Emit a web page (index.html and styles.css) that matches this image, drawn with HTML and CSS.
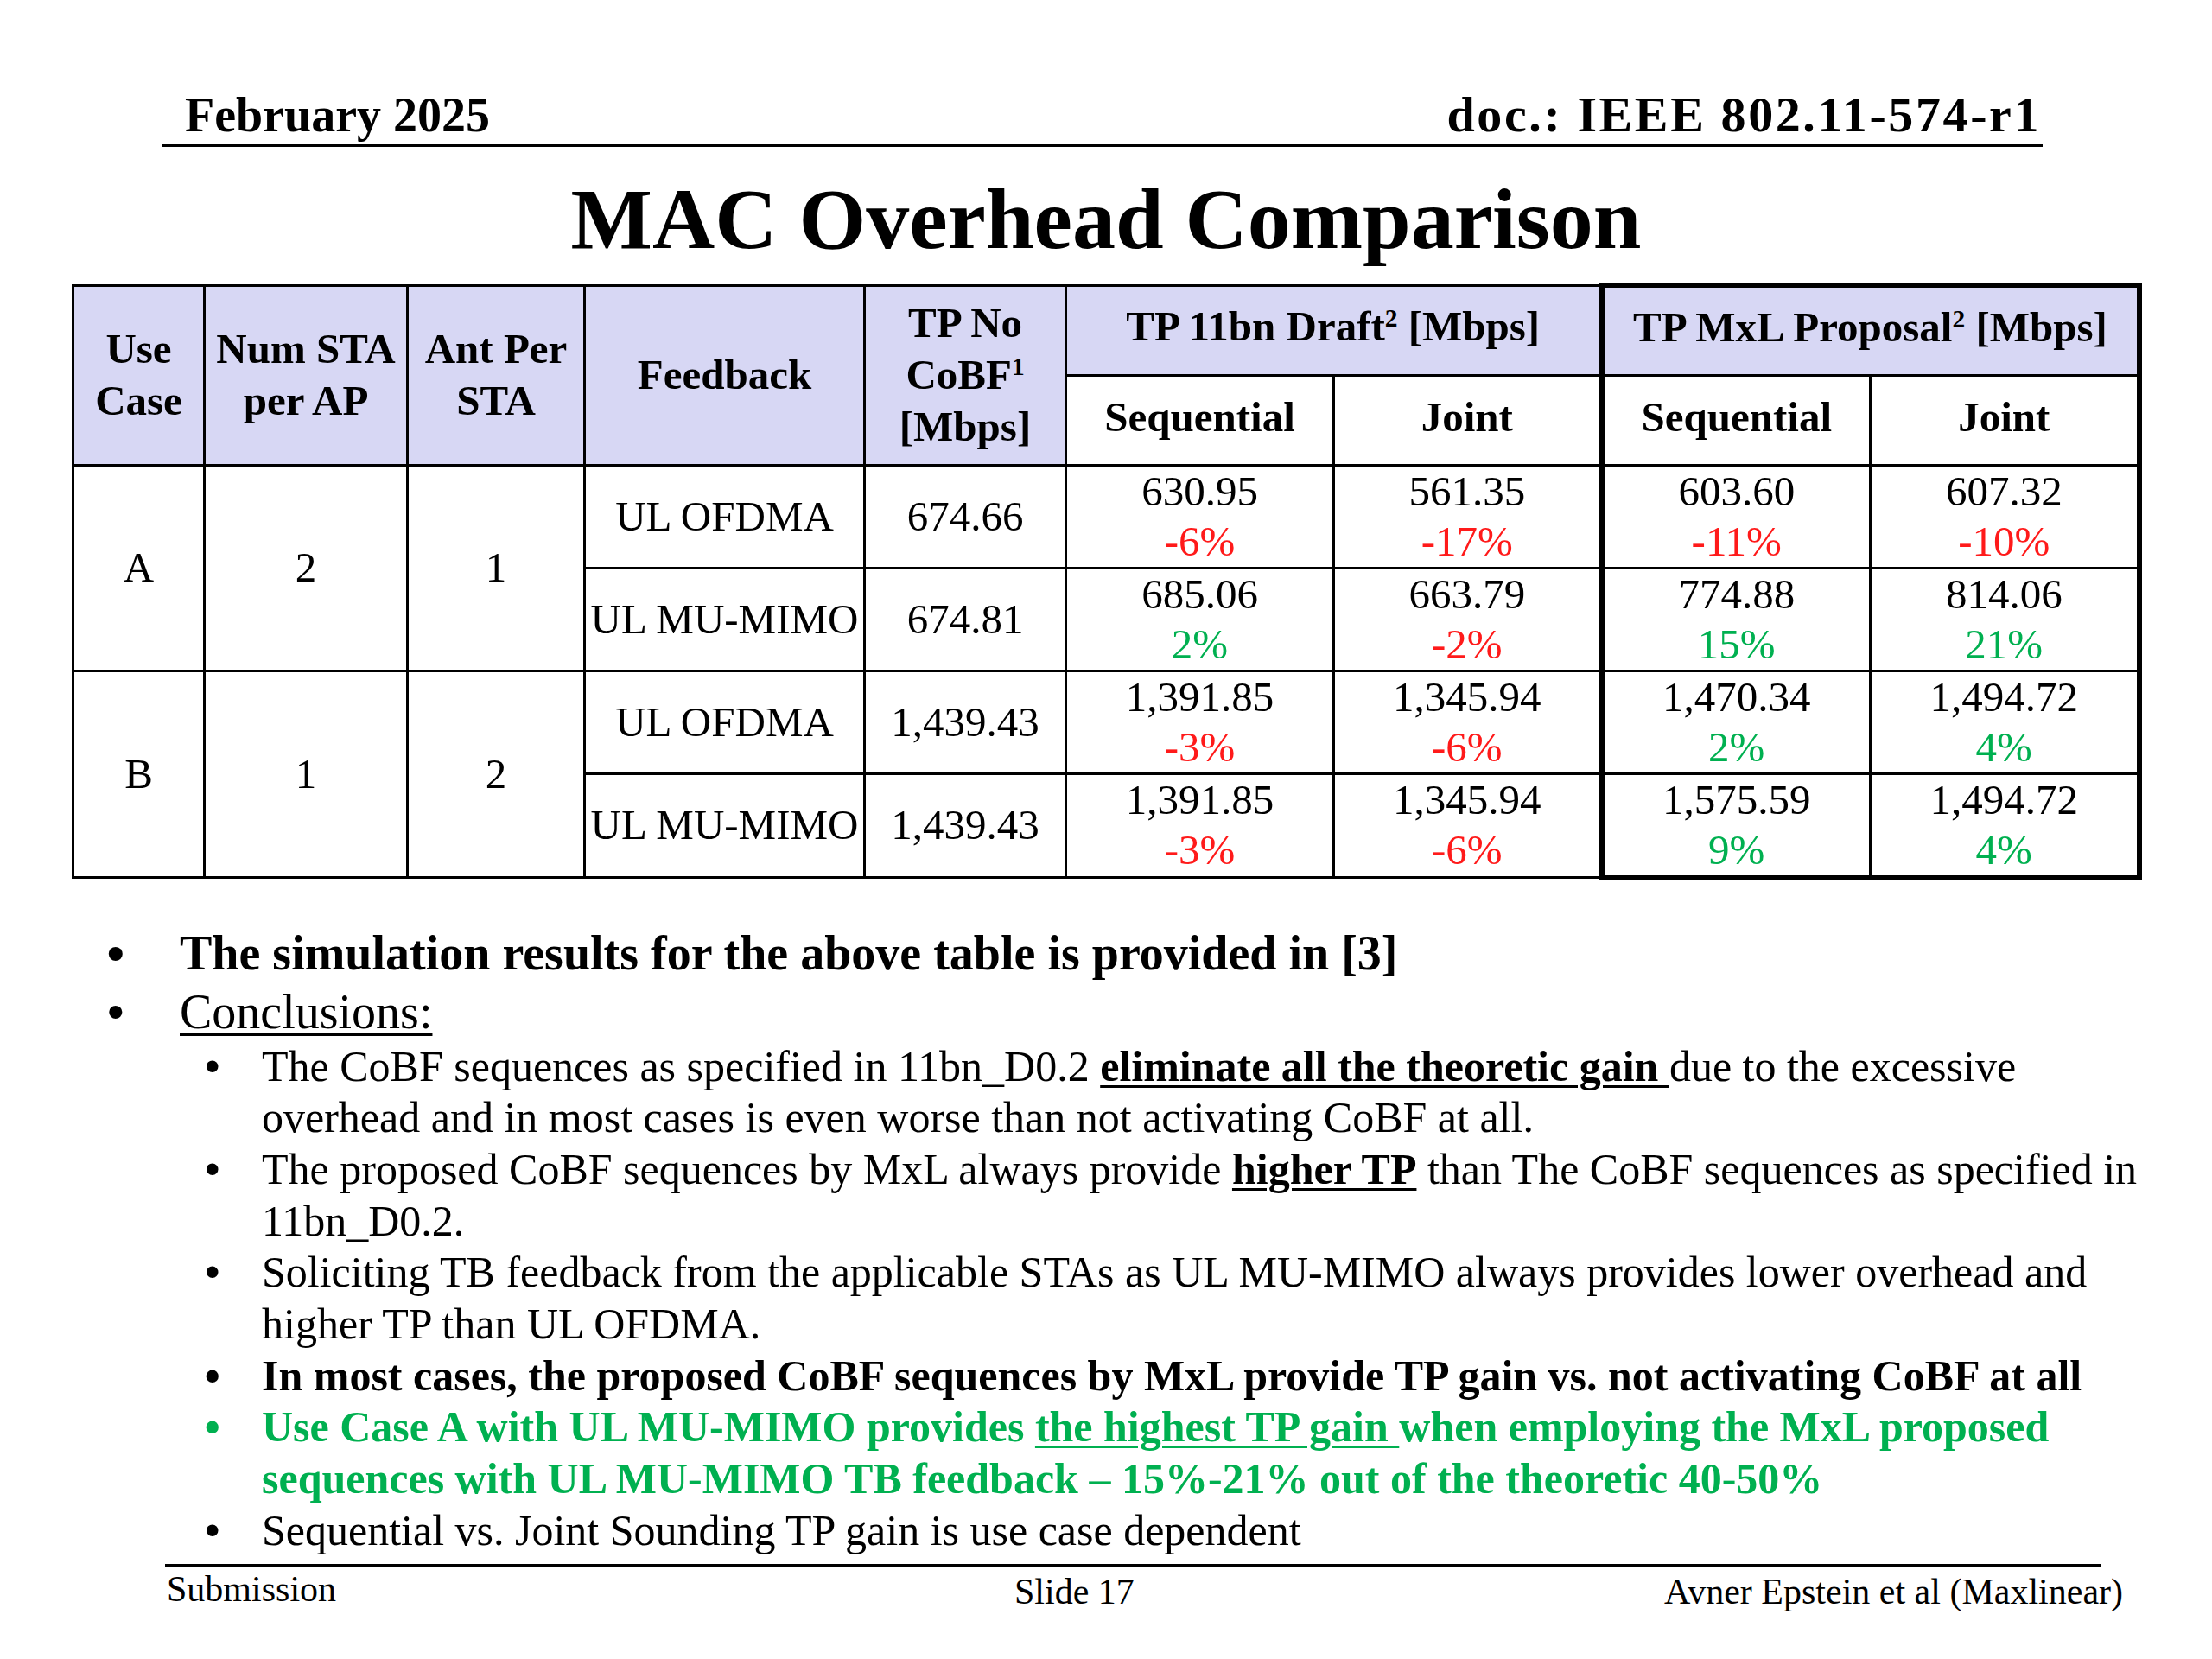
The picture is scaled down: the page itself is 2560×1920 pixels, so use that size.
FILE: index.html
```html
<!DOCTYPE html>
<html lang="en">
<head>
<meta charset="utf-8">
<title>MAC Overhead Comparison</title>
<link rel="stylesheet" href="styles.css">
</head>
<body>
<div class="slide">
  <header class="slide-header">
    <span class="date">February 2025</span>
    <span class="doc">doc.: IEEE 802.11-574-r1</span>
  </header>

  <h1 class="title">MAC Overhead Comparison</h1>

  <table class="results">
    <colgroup>
      <col class="c-use"><col class="c-num"><col class="c-ant"><col class="c-fb"><col class="c-nocobf">
      <col class="c-val"><col class="c-val"><col class="c-val2"><col class="c-val2">
    </colgroup>
    <thead>
      <tr class="hrow1">
        <th rowspan="2">Use<br>Case</th>
        <th rowspan="2">Num STA<br>per AP</th>
        <th rowspan="2">Ant Per<br>STA</th>
        <th rowspan="2">Feedback</th>
        <th rowspan="2">TP No<br>CoBF<sup>1</sup><br>[Mbps]</th>
        <th colspan="2" class="grp">TP 11bn Draft<sup>2</sup> [Mbps]</th>
        <th colspan="2" class="grp mx-top mx-l mx-r">TP MxL Proposal<sup>2</sup> [Mbps]</th>
      </tr>
      <tr class="hrow2">
        <th class="sub">Sequential</th>
        <th class="sub">Joint</th>
        <th class="sub mx-l">Sequential</th>
        <th class="sub mx-r">Joint</th>
      </tr>
    </thead>
    <tbody>
      <tr class="drow">
        <td rowspan="2">A</td>
        <td rowspan="2">2</td>
        <td rowspan="2">1</td>
        <td>UL OFDMA</td>
        <td>674.66</td>
        <td>630.95<br><span class="neg">-6%</span></td>
        <td>561.35<br><span class="neg">-17%</span></td>
        <td class="mx-l">603.60<br><span class="neg">-11%</span></td>
        <td class="mx-r">607.32<br><span class="neg">-10%</span></td>
      </tr>
      <tr class="drow">
        <td>UL MU-MIMO</td>
        <td>674.81</td>
        <td>685.06<br><span class="pos">2%</span></td>
        <td>663.79<br><span class="neg">-2%</span></td>
        <td class="mx-l">774.88<br><span class="pos">15%</span></td>
        <td class="mx-r">814.06<br><span class="pos">21%</span></td>
      </tr>
      <tr class="drow">
        <td rowspan="2">B</td>
        <td rowspan="2">1</td>
        <td rowspan="2">2</td>
        <td>UL OFDMA</td>
        <td>1,439.43</td>
        <td>1,391.85<br><span class="neg">-3%</span></td>
        <td>1,345.94<br><span class="neg">-6%</span></td>
        <td class="mx-l">1,470.34<br><span class="pos">2%</span></td>
        <td class="mx-r">1,494.72<br><span class="pos">4%</span></td>
      </tr>
      <tr class="drow">
        <td>UL MU-MIMO</td>
        <td>1,439.43</td>
        <td>1,391.85<br><span class="neg">-3%</span></td>
        <td>1,345.94<br><span class="neg">-6%</span></td>
        <td class="mx-l mx-b">1,575.59<br><span class="pos">9%</span></td>
        <td class="mx-r mx-b">1,494.72<br><span class="pos">4%</span></td>
      </tr>
    </tbody>
  </table>

  <ul class="bullets">
    <li class="l1 strong">The simulation results for the above table is provided in [3]</li>
    <li class="l1"><u>Conclusions:</u>
      <ul class="sub-bullets">
        <li class="l2">The CoBF sequences as specified in 11bn_D0.2 <b><u>eliminate all the theoretic gain </u></b>due to the excessive<br>overhead and in most cases is even worse than not activating CoBF at all.</li>
        <li class="l2">The proposed CoBF sequences by MxL always provide <b><u>higher TP</u></b> than The CoBF sequences as specified in<br>11bn_D0.2.</li>
        <li class="l2">Soliciting TB feedback from the applicable STAs as UL MU-MIMO always provides lower overhead and<br>higher TP than UL OFDMA.</li>
        <li class="l2 strong">In most cases, the proposed CoBF sequences by MxL provide TP gain vs. not activating CoBF at all</li>
        <li class="l2 strong green">Use Case A with UL MU-MIMO provides <u>the highest TP gain </u>when employing the MxL proposed<br>sequences with UL MU-MIMO TB feedback – 15%-21% out of the theoretic 40-50%</li>
        <li class="l2">Sequential vs. Joint Sounding TP gain is use case dependent</li>
      </ul>
    </li>
  </ul>

  <footer class="slide-footer">
    <div class="footer-rule"></div>
    <div class="footer-row">
      <span class="f-left">Submission</span>
      <span class="f-mid">Slide 17</span>
      <span class="f-right">Avner Epstein et al (Maxlinear)</span>
    </div>
  </footer>
</div>
</body>
</html>
```

FILE: styles.css
```css
html, body {
  margin: 0;
  padding: 0;
  background: #ffffff;
}

.slide {
  width: 2560px;
  height: 1920px;
  font-family: "Liberation Serif", "Times New Roman", serif;
  color: #000000;
  overflow: hidden;
}

/* ---------- header ---------- */
.slide-header {
  margin: 101px 0 0 188px;
  width: 2176px;
  box-sizing: border-box;
  padding: 0 2px 2px 26px;
  border-bottom: 3px solid #000;
  display: flex;
  justify-content: space-between;
  align-items: baseline;
  font-weight: bold;
  font-size: 56px;
  line-height: 64px;
}

.slide-header .doc {
  font-size: 58px;
  letter-spacing: 2.6px;
}

/* ---------- title ---------- */
.title {
  margin: 29px 0 0 0;
  text-align: center;
  font-size: 100px;
  line-height: 110px;
  font-weight: bold;
}

/* ---------- table ---------- */
.results {
  margin: 18px 0 0 83px;
  border-collapse: collapse;
  table-layout: fixed;
  width: 2393px;
  font-size: 49px;
  line-height: 58px;
}

.c-use { width: 152px; }
.c-num { width: 235px; }
.c-ant { width: 205px; }
.c-fb { width: 324px; }
.c-nocobf { width: 233px; }
.c-val { width: 310px; }
.c-val2 { width: 311px; }

.results th,
.results td {
  border: 3px solid #000;
  padding: 0;
  text-align: center;
  vertical-align: middle;
  white-space: nowrap;
}

.results th {
  background: #d7d7f4;
  font-weight: bold;
  line-height: 60px;
}

.results th.grp {
  padding-bottom: 8px;
}

.results th.sub {
  background: #ffffff;
  padding-bottom: 6px;
}

.results sup {
  font-size: 0.6em;
  line-height: 0;
  vertical-align: 0.55em;
}

.hrow1 { height: 104px; }
.hrow2 { height: 104px; }
.drow { height: 116px; }

.results .mx-top { border-top: 6px solid #000; }
.results .mx-l { border-left: 6px solid #000; }
.results .mx-r { border-right: 6px solid #000; }
.results .mx-b { border-bottom: 6px solid #000; }

.neg { color: #ff1a1a; }
.pos { color: #00b050; }

/* ---------- bullets ---------- */
.bullets {
  list-style: none;
  margin: 50px 0 0 0;
  padding: 0;
}

.l1 {
  font-size: 56px;
  line-height: 68px;
  padding-left: 208px;
  position: relative;
}

.l1::before {
  content: "\2022";
  font-family: "Liberation Sans", Arial, sans-serif;
  position: absolute;
  left: 124px;
  top: 0;
}

.l1 u {
  text-decoration-thickness: 3px;
  text-underline-offset: 6px;
}

.strong { font-weight: bold; }

.sub-bullets {
  list-style: none;
  margin: 0 0 0 -208px;
  padding: 0;
  font-weight: normal;
}

.l2 {
  font-size: 50px;
  line-height: 59.7px;
  padding-left: 303px;
  position: relative;
  white-space: nowrap;
}

.l2::before {
  content: "\2022";
  font-family: "Liberation Sans", Arial, sans-serif;
  position: absolute;
  left: 237px;
  top: 0;
}

.l2 u {
  text-decoration-thickness: 3px;
  text-underline-offset: 5px;
}

.l2.strong { font-weight: bold; }

.green { color: #00b050; }

/* ---------- footer ---------- */
.slide-footer {
  margin-top: 8px;
}

.footer-rule {
  margin-left: 191px;
  width: 2240px;
  border-top: 3px solid #000;
}

.footer-row {
  display: grid;
  grid-template-columns: 981px auto 1fr;
  padding-left: 193px;
  width: 2264px;
  font-size: 42px;
  line-height: 48px;
  padding-top: 2px;
}

.f-mid { padding-top: 3px; }

.f-right {
  text-align: right;
  padding-top: 3px;
}
```
